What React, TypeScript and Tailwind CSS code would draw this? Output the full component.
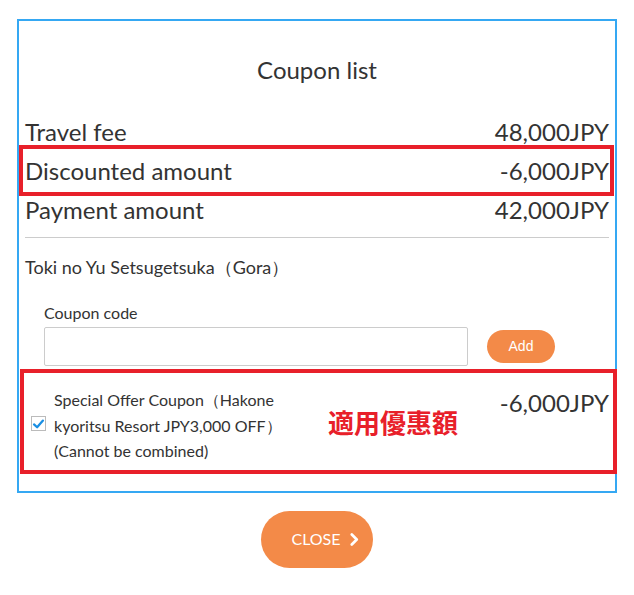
import React, { useState } from 'react'

const font = { fontFamily: 'Lato, "Noto Sans", sans-serif' }

const rows = [
    { label: 'Travel fee', value: '48,000JPY', marked: false },
    { label: 'Discounted amount', value: '-6,000JPY', marked: true },
    { label: 'Payment amount', value: '42,000JPY', marked: false },
]

export default function App() {
    const [code, setCode] = useState('')
    const [checked, setChecked] = useState(true)

    return (
        <div className="w-[634px] h-[595px] bg-white pt-[19px] text-[#333]" style={font}>
            <div className="ml-[17px] w-[600px] border-2 border-[#35a8f3] px-[6px] pt-[31px] pb-[21px]">
                <h2 className="text-center text-[24px] leading-[36px] font-normal">Coupon list</h2>

                <div className="mt-[24px] border-b border-[#ccc] pb-[8px]">
                    {rows.map((r) => (
                        <div key={r.label} className="relative flex justify-between text-[24px] leading-[39px]">
                            <span>{r.label}</span>
                            <span>{r.value}</span>
                            {r.marked && (
                                <span className="absolute -left-[6px] -right-[5px] top-[-6px] bottom-[-6px] border-4 border-[#e8202a]" />
                            )}
                        </div>
                    ))}
                </div>

                <div className="mt-[16px] text-[18px] leading-[26px]">Toki no Yu Setsugetsuka（Gora）</div>

                <div className="mt-[21px] pl-[19px]">
                    <label className="block text-[16px] leading-[24px]">Coupon code</label>
                    <div className="mt-[2px] flex items-center gap-[19px]">
                        <input
                            value={code}
                            onChange={(e) => setCode(e.target.value)}
                            className="w-[424px] h-[39px] border border-[#ccc] rounded-[2px] px-2 outline-none"
                        />
                        <button
                            className="w-[68px] h-[33px] rounded-full bg-[#f38a48] text-white text-[14px]"
                            style={{ fontFamily: '"Liberation Sans", Arial, sans-serif' }}
                        >
                            Add
                        </button>
                    </div>
                </div>

                <div className="relative mt-[7px] flex items-start pt-[14px] pb-[6px]">
                    <span className="absolute -left-[5px] -right-[8px] top-[-4px] bottom-[-4px] border-4 border-[#e8202a]" />
                    <button
                        onClick={() => setChecked(!checked)}
                        className="ml-[6px] mt-[29px] w-[15px] h-[15px] border border-[#bbb] bg-white flex items-center justify-center"
                        aria-label="Apply coupon"
                    >
                        {checked && (
                            <svg viewBox="0 0 16 16" className="w-[14px] h-[14px]">
                                <path d="M2.5 8.5 L6.3 12 L13.5 3.8" fill="none" stroke="#1a8fe3" strokeWidth="2.8" strokeLinecap="round" strokeLinejoin="round" />
                            </svg>
                        )}
                    </button>
                    <div className="ml-[8px] w-[240px] text-[16px] leading-[25.5px]">
                        Special Offer Coupon（Hakone kyoritsu Resort JPY3,000 OFF）(Cannot be combined)
                    </div>
                    <div
                        className="ml-[34px] mt-[19px] text-[26px] leading-[32px] font-bold text-[#e8202a]"
                        style={{ fontFamily: '"Noto Sans CJK JP", sans-serif' }}
                    >
                        適用優惠額
                    </div>
                    <div className="ml-auto mt-[1px] text-[24px] leading-[30px]">-6,000JPY</div>
                </div>
            </div>

            <div className="mt-[18px] flex justify-center">
                <button className="w-[112px] h-[57px] rounded-full bg-[#f38a48] text-white text-[16px] flex items-center justify-center gap-[9px] pl-[16px]">
                    CLOSE
                    <svg viewBox="0 0 10 14" className="w-[9px] h-[13px]">
                        <path d="M2 1.5 L7.5 7 L2 12.5" fill="none" stroke="white" strokeWidth="3" strokeLinecap="round" strokeLinejoin="round" />
                    </svg>
                </button>
            </div>
        </div>
    )
}
